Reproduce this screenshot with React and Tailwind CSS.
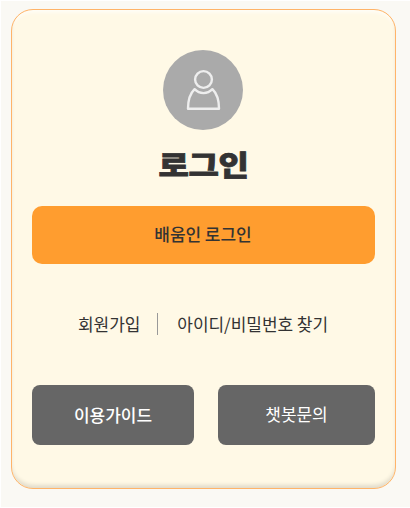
const FONT = "font-['Noto_Sans_CJK_KR',sans-serif]";

function UserAvatar() {
  return (
    <div className="mr-px flex h-20 w-20 items-center justify-center rounded-full bg-[#aaaaaa]">
      <svg
        width="80"
        height="80"
        viewBox="0 0 80 80"
        fill="none"
        stroke="#eeeeee"
        strokeWidth="2.4"
        strokeLinejoin="round"
      >
        <circle cx="40.5" cy="29.5" r="8.4" />
        <path d="M31.6 39.2C27.2 43.4 25 50 25 58.8h31c0-8.8-2.2-15.4-6.6-19.6-2.4 2.5-5.4 3.9-8.9 3.9s-6.5-1.4-8.9-3.9Z" />
      </svg>
    </div>
  );
}

function GuideButton({ label, className }) {
  return (
    <button
      type="button"
      className={`h-[60px] rounded-lg bg-[#666666] text-[17px] tracking-[-0.05px] text-white ${className}`}
    >
      {label}
    </button>
  );
}

export default function App() {
  return (
    <div className={`h-[508px] w-[410px] border-t border-l border-b border-white bg-[#faf9f4] pt-2 pl-2.5 text-[#333333] ${FONT}`}>
      <main className="flex h-[480px] w-[385px] flex-col items-center rounded-[22px] border border-[#ffb469] bg-[#fff9e6] px-5 pt-10 shadow-[inset_0_-4px_4px_-1px_rgba(0,0,0,0.12),inset_0_4px_4px_-2px_rgba(255,255,255,0.8)]">
        <UserAvatar />
        <h1 className="mt-3 h-[44px] scale-y-[0.86] text-[33px] leading-[44px] font-black tracking-[-0.4px] [-webkit-text-stroke:0.9px_#333333]">로그인</h1>

        <button
          type="button"
          className="mt-5 h-[58px] w-full rounded-[10px] bg-[#ff9d2f] pr-px pb-0.5 text-[17px] font-medium tracking-[-0.05px]"
        >
          배움인 로그인
        </button>

        {/* Account links */}
        <div className="mt-[49px] flex h-[22px] items-center text-[17px] tracking-[-0.05px] whitespace-nowrap">
          <a href="#join" className="-ml-px">회원가입</a>
          <span className="mr-[19px] ml-[17px] h-[22px] w-px bg-[#999999]" />
          <a href="#find">아이디/비밀번호 찾기</a>
        </div>

        <div className="mt-[50px] flex w-full justify-between">
          <GuideButton label="이용가이드" className="w-[162px] font-medium" />
          <GuideButton label="챗봇문의" className="w-[157px] pb-0.5" />
        </div>
      </main>
    </div>
  );
}
